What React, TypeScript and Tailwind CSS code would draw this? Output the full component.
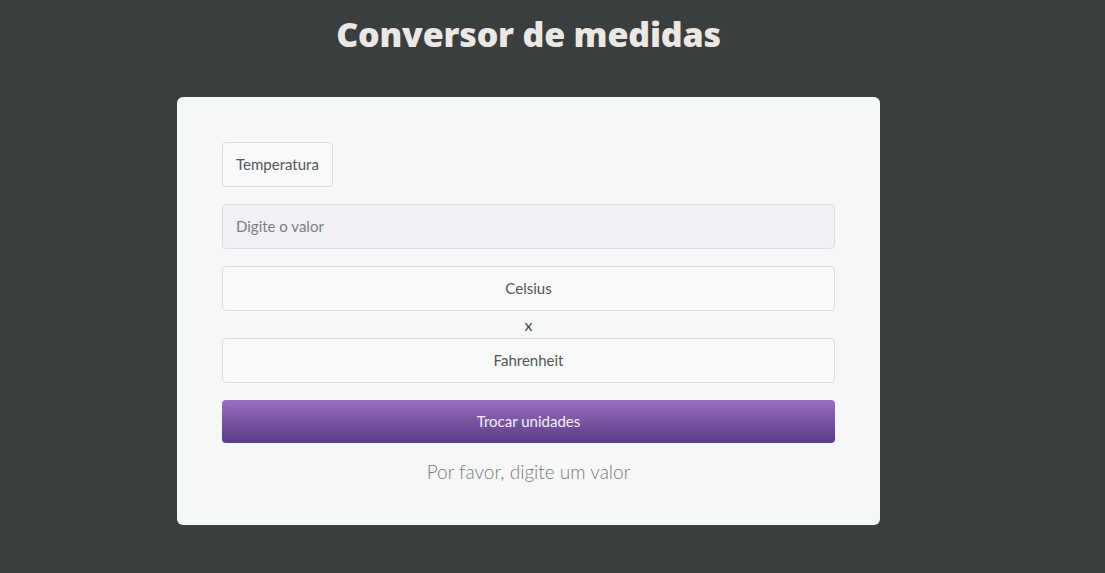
export default function App() {
  return (
    <div className="min-h-[573px] w-full bg-[#393e3f] font-['Lato','Open_Sans',sans-serif]">
      <div className="ml-[177px] flex w-[703px] flex-col">
        <h1 className="pt-[12px] text-center font-['Open_Sans','Lato',sans-serif] text-[34px] font-extrabold leading-[44px] tracking-[-0.2px] text-[#ebe7e2]">
          Conversor de medidas
        </h1>

        <div className="mt-[41px] flex h-[428px] flex-col rounded-[6px] bg-[#f6f7f7] px-[45px] pt-[45px]">
          <div className="flex">
            <div className="flex h-[45px] w-[111px] items-center justify-center rounded-[4px] border border-[#dcdcdc] bg-[#f8f9f9] text-[15px] text-[#555]">
              Temperatura
            </div>
          </div>

          <div className="mt-[17px] flex h-[45px] items-center rounded-[4px] border border-[#dcdcdc] bg-[#f1f1f5] px-[13px] text-[15px] text-[#7d7d7d]">
            Digite o valor
          </div>

          <div className="mt-[17px] flex h-[45px] items-center justify-center rounded-[4px] border border-[#dcdcdc] bg-[#f8f9f9] text-[15px] text-[#555]">
            Celsius
          </div>

          <div className="flex h-[27px] items-center justify-center text-[16px] text-[#444]">
            x
          </div>

          <div className="flex h-[45px] items-center justify-center rounded-[4px] border border-[#dcdcdc] bg-[#f8f9f9] text-[15px] text-[#555]">
            Fahrenheit
          </div>

          <button className="mt-[17px] flex h-[43px] items-center justify-center rounded-[4px] bg-gradient-to-b from-[#9a6fc0] to-[#5a3b86] text-[15px] text-[#f4eefa]">
            Trocar unidades
          </button>

          <p className="mt-[15px] text-center text-[19px] font-light text-[#777]">
            Por favor, digite um valor
          </p>
        </div>
      </div>
    </div>
  );
}
